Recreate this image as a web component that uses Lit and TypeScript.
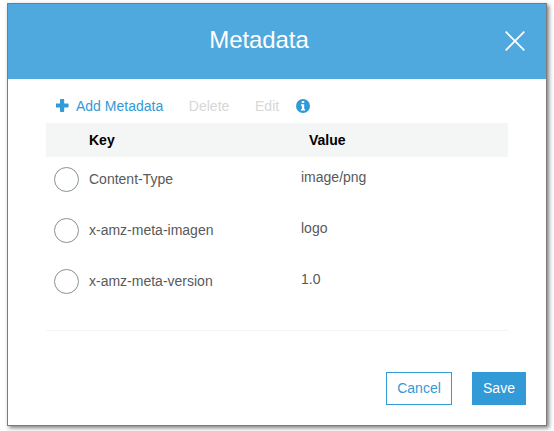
import { LitElement, html, css } from "lit";
import { customElement, property, state } from "lit/decorators.js";

interface Entry {
  key: string;
  value: string;
}

@customElement("metadata-table")
class MetadataTable extends LitElement {
  @property({ attribute: false }) entries: Entry[] = [];

  static styles = css`
    :host {
      display: block;
      border-bottom: 1px solid #f3f5f5;
      height: 207px;
    }
    .head,
    .row {
      display: grid;
      grid-template-columns: 43px 212px 1fr;
    }
    .head {
      height: 34px;
      line-height: 34px;
      background: #f4f6f6;
      color: #000;
      font-weight: bold;
    }
    .head .value {
      padding-left: 8px;
    }
    .row {
      height: 51px;
      box-sizing: border-box;
      padding-top: 10px;
      color: #58595b;
      line-height: 24px;
    }
    .row .value {
      line-height: 20px;
    }
    .radio {
      box-sizing: border-box;
      width: 25px;
      height: 25px;
      margin-left: 8px;
      border: 1px solid #879196;
      border-radius: 50%;
    }
  `;

  render() {
    return html`
      <div class="head"><span></span><span>Key</span><span class="value">Value</span></div>
      ${this.entries.map(
        (e) => html`<div class="row">
          <span class="radio"></span><span>${e.key}</span><span class="value">${e.value}</span>
        </div>`
      )}
    `;
  }
}

@customElement("app-root")
class AppRoot extends LitElement {
  @state() private entries: Entry[] = [
    { key: "Content-Type", value: "image/png" },
    { key: "x-amz-meta-imagen", value: "logo" },
    { key: "x-amz-meta-version", value: "1.0" },
  ];

  static styles = css`
    :host {
      display: block;
      box-sizing: border-box;
      height: 431px;
      padding: 3px 7px 5px;
      overflow: hidden;
      background: #fff;
      font: 14px "Liberation Sans", Arial, sans-serif;
    }
    .dialog {
      box-sizing: border-box;
      height: 423px;
      border: 1px solid #7b7b7b;
      box-shadow: 2px 2px 4px rgba(0, 0, 0, 0.5);
      background: #fff;
    }
    header {
      display: grid;
      grid-template-columns: 1fr auto 1fr;
      height: 75px;
      background: #4fa9de;
      color: #fff;
    }
    h1 {
      grid-column: 2;
      margin: 0;
      padding-right: 36px;
      font-size: 24px;
      font-weight: normal;
      line-height: 72px;
      letter-spacing: -0.1px;
    }
    .close {
      justify-self: end;
      margin: 27px 21px 0 0;
    }
    svg {
      display: block;
    }
    .toolbar {
      display: flex;
      align-items: flex-start;
      height: 44px;
      padding-left: 48px;
      box-sizing: border-box;
      line-height: 16px;
      padding-top: 19px;
    }
    .add {
      display: flex;
      color: #329ad6;
    }
    .add svg {
      margin: 1px 7px 0 0;
    }
    .off {
      margin-left: 25.700px;
      color: #d5d8d9;
    }
    .info {
      margin: 1px 0 0 16.500px;
    }
    metadata-table {
      margin: 0 38px;
    }
    footer {
      display: flex;
      justify-content: flex-end;
      gap: 20px;
      padding: 41px 20px 0 0;
    }
    button {
      box-sizing: border-box;
      height: 33px;
      padding: 0 0 1px;
      border: 1px solid #329ad6;
      background: #fff;
      color: #329ad6;
      font: inherit;
    }
    .cancel {
      width: 66px;
    }
    .save {
      width: 54px;
      background: #329ad6;
      color: #fff;
    }
  `;

  render() {
    return html`
      <div class="dialog">
        <header>
          <h1>Metadata</h1>
          <svg class="close" width="20" height="20" viewBox="0 0 20 20">
            <path d="M.7.7 19.3 19.3M19.3.7.7 19.3" stroke="#fff" stroke-width="1.7" />
          </svg>
        </header>
        <div class="toolbar">
          <span class="add">
            <svg width="13" height="13" viewBox="0.4 0 13 13">
              <path
                d="M5.300 0h2.400q.9 0 .9.9V4.500h3.500q.9 0 .9.9v2.200q0 .9-.9.9H8.600v3.600q0 .9-.9.9H5.300q-.9 0-.9-.9V8.500H.9Q0 8.500 0 7.600V5.400Q0 4.500 .9 4.500h3.500V.9Q4.400 0 5.300 0Z"
                fill="#329ad6"
              />
            </svg>
            Add Metadata
          </span>
          <span class="off">Delete</span>
          <span class="off">Edit</span>
          <svg class="info" width="14" height="14" viewBox="0 0 14 14">
            <circle cx="7" cy="7" r="7" fill="#329ad6" />
            <path d="M5.800 2h2.400v2H5.800ZM5 5.200h3.200V10H9v1.600H5V10h.9V6.800H5Z" fill="#fff" />
          </svg>
        </div>
        <metadata-table .entries=${this.entries}></metadata-table>
        <footer>
          <button class="cancel">Cancel</button>
          <button class="save">Save</button>
        </footer>
      </div>
    `;
  }
}
